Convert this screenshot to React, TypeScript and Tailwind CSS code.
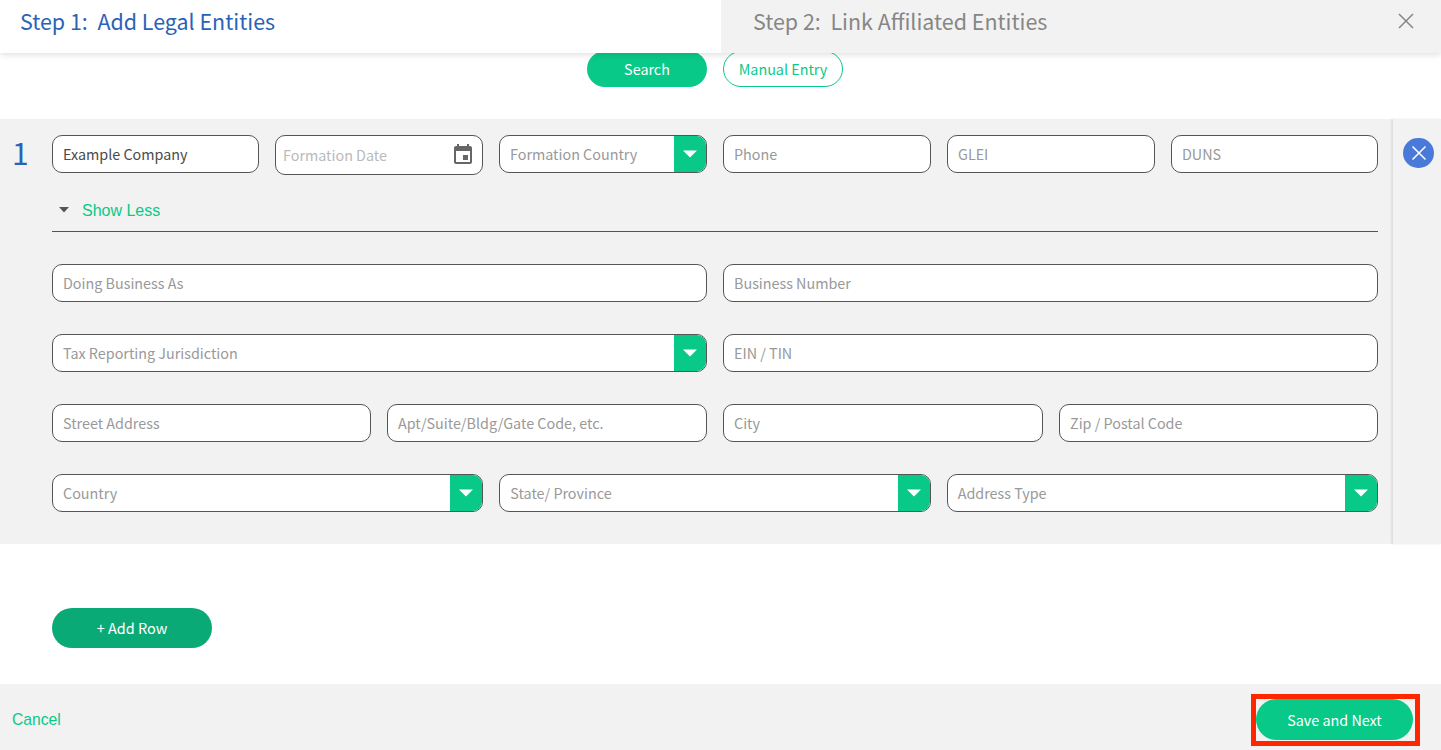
import React from "react";

const SANS = "font-['Noto_Sans_CJK_KR','Noto_Sans',sans-serif]";

function Caret() {
  return (
    <svg width="14" height="8" viewBox="0 0 14 8" aria-hidden="true">
      <path d="M0 0.5h14L7 7.5z" fill="#ffffff" />
    </svg>
  );
}

function TextField({ placeholder, value }: { placeholder: string; value?: string }) {
  return (
    <div className={`h-[38px] rounded-[10px] border border-[#555] bg-white flex items-center px-[10px] text-[14.35px] ${value ? "text-[#4a4a4a]" : "text-[#999]"}`}>
      {value ?? placeholder}
    </div>
  );
}

function SelectField({ placeholder }: { placeholder: string }) {
  return (
    <div className="h-[38px] rounded-[10px] border border-[#555] bg-white flex items-center overflow-hidden text-[14.35px] text-[#999]">
      <span className="flex-1 pl-[10px]">{placeholder}</span>
      <span className="w-[32px] h-full bg-[#09c988] flex items-center justify-center">
        <Caret />
      </span>
    </div>
  );
}

export default function App() {
  return (
    <div className={`${SANS} w-[1441px] h-[750px] overflow-hidden bg-white flex flex-col`}>
      <header className="relative z-10 h-[53px] flex shrink-0 shadow-[0_2px_6px_rgba(0,0,0,0.12)]">
        <div className="w-[721px] bg-white flex items-center pl-[20px] text-[21.45px] text-[#2a62b8] whitespace-pre leading-none pb-[11px]">
          Step 1:{"  "}Add Legal Entities
        </div>
        <div className="flex-1 bg-[#f2f2f2] flex items-center justify-between pl-[32px] pr-[27px] text-[21.45px] text-[#868686] whitespace-pre leading-none pb-[11px]">
          <span>Step 2:{"  "}Link Affiliated Entities</span>
          <svg width="16" height="16" viewBox="0 0 16 16" aria-hidden="true">
            <path d="M1 1l14 14M15 1L1 15" stroke="#868686" strokeWidth="1.5" fill="none" />
          </svg>
        </div>
      </header>

      <div className="h-[66px] shrink-0 flex justify-center gap-4 pr-[11px]">
        <button className="-mt-[2px] w-[120px] h-[36px] rounded-full bg-[#09c988] text-white text-[14.35px] flex items-center justify-center">
          Search
        </button>
        <button className="-mt-[2px] w-[120px] h-[36px] rounded-full border border-[#09c988] bg-white text-[#09c988] text-[14.35px] flex items-center justify-center">
          Manual Entry
        </button>
      </div>

      <section className="h-[425px] shrink-0 bg-[#f2f2f2] flex">
        <div className="w-[52px] shrink-0 pl-[12px] pt-[11px] text-[30px] leading-[44px] text-[#2a62b8]">1</div>
        <div className="w-[1326px] shrink-0 pt-[16px]">
          <div className="grid grid-cols-[207px_208px_208px_208px_208px_207px] gap-x-4">
            <TextField placeholder="Legal Name" value="Example Company" />
            <div className="h-[40px] rounded-[10px] border border-[#555] bg-white flex items-center justify-between pl-[7px] pr-[7px] text-[14.35px] text-[#b9b9b9]">
              <span>Formation Date</span>
              <svg width="24" height="24" viewBox="0 0 24 24" aria-hidden="true">
                <path fill="#666" d="M17 12h-5v5h5v-5zM16 1v2H8V1H6v2H5c-1.11 0-1.99.9-1.99 2L3 19c0 1.1.89 2 2 2h14c1.1 0 2-.9 2-2V5c0-1.1-.9-2-2-2h-1V1h-2zm3 18H5V8h14v11z" />
              </svg>
            </div>
            <SelectField placeholder="Formation Country" />
            <TextField placeholder="Phone" />
            <TextField placeholder="GLEI" />
            <TextField placeholder="DUNS" />
          </div>

          <div className="mt-[18px] h-[39px] border-b border-[#555] flex items-start pl-[7px] pt-[7px]">
            <svg width="10" height="6" viewBox="0 0 10 6" aria-hidden="true" className="mt-[7px]">
              <path d="M0 0h10L5 5.5z" fill="#555" />
            </svg>
            <span className="ml-[13px] font-['Liberation_Sans',sans-serif] text-[16px] leading-[22px] text-[#09c988]">Show Less</span>
          </div>

          <div className="mt-[32px] flex flex-col gap-y-[32px]">
            <div className="grid grid-cols-2 gap-x-4">
              <TextField placeholder="Doing Business As" />
              <TextField placeholder="Business Number" />
            </div>
            <div className="grid grid-cols-2 gap-x-4">
              <SelectField placeholder="Tax Reporting Jurisdiction" />
              <TextField placeholder="EIN / TIN" />
            </div>
            <div className="grid grid-cols-[319px_320px_320px_319px] gap-x-4">
              <TextField placeholder="Street Address" />
              <TextField placeholder="Apt/Suite/Bldg/Gate Code, etc." />
              <TextField placeholder="City" />
              <TextField placeholder="Zip / Postal Code" />
            </div>
            <div className="grid grid-cols-3 gap-x-4">
              <SelectField placeholder="Country" />
              <SelectField placeholder="State/ Province" />
              <SelectField placeholder="Address Type" />
            </div>
          </div>
        </div>
        <div className="ml-[15px] flex-1 shadow-[-2px_0_2px_rgba(0,0,0,0.08)] pl-[10px] pt-[19px]">
          <span className="w-[31px] h-[30px] rounded-full bg-[#4a7ad9] flex items-center justify-center">
            <svg width="16" height="16" viewBox="0 0 16 16" aria-hidden="true">
              <path d="M1.5 1.5l13 13M14.5 1.5l-13 13" stroke="#fff" strokeWidth="1.5" fill="none" />
            </svg>
          </span>
        </div>
      </section>

      <div className="h-[140px] shrink-0 pl-[52px] pt-[64px]">
        <button className="w-[160px] h-[40px] rounded-full bg-[#0aaa76] text-white text-[14.5px] flex items-center justify-center">
          + Add Row
        </button>
      </div>

      <footer className="flex-1 bg-[#f2f2f2] flex items-center justify-between pl-[12px] pr-[21px]">
        <span className="mt-[6px] font-['Liberation_Sans',sans-serif] text-[15.7px] text-[#09c988]">Cancel</span>
        <div className="mt-[6px] border-[5px] border-[#ff2600] pr-[2px] pb-[1px]">
          <button className="w-[157px] h-[41px] rounded-full bg-[#09c988] text-white text-[14.35px] flex items-center justify-center">
            Save and Next
          </button>
        </div>
      </footer>
    </div>
  );
}
